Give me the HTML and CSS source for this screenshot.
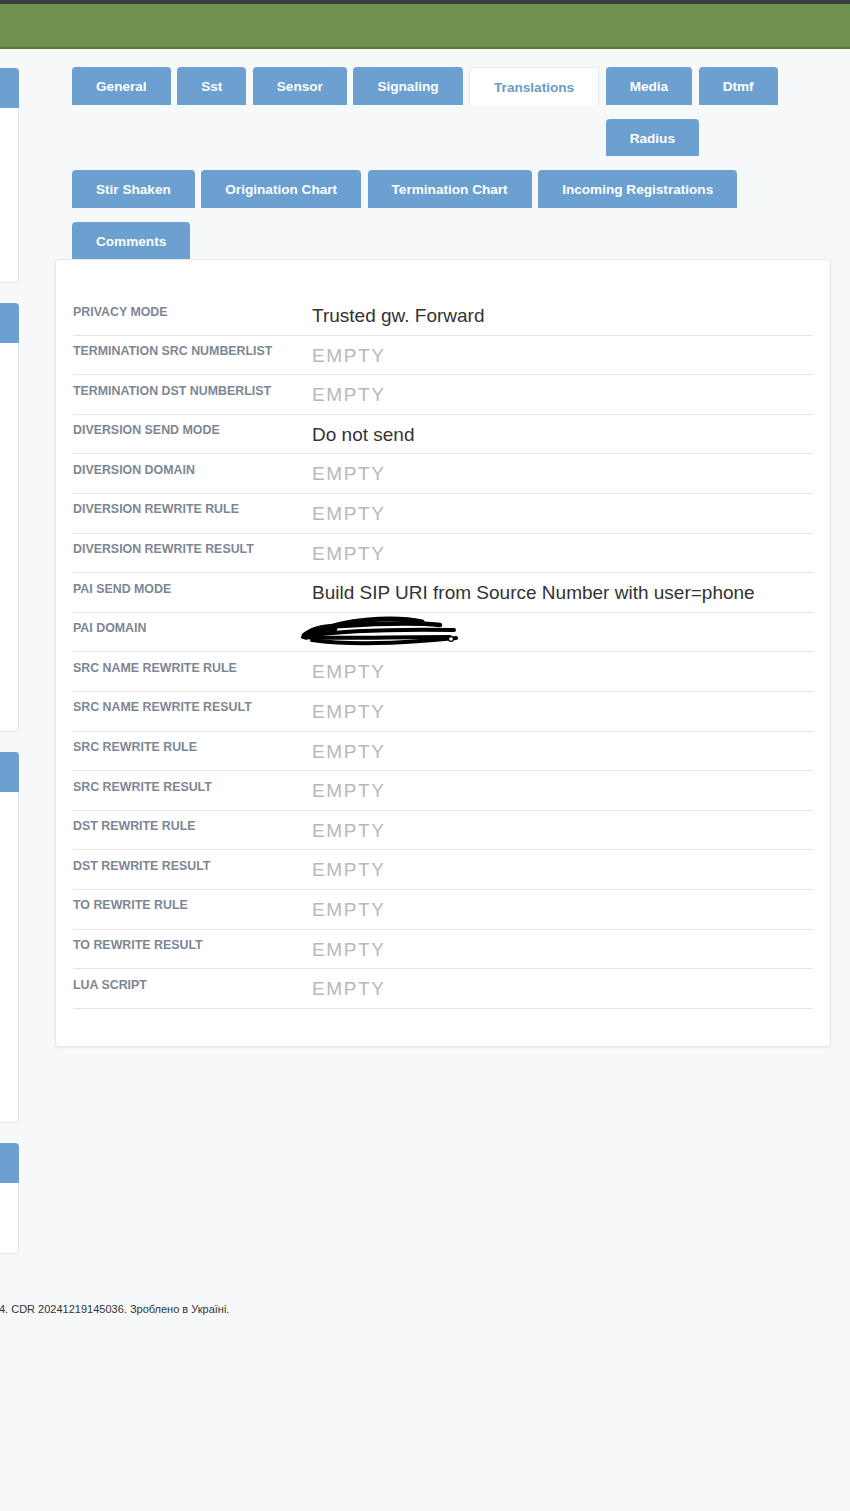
FILE: index.html
```html
<!DOCTYPE html>
<html lang="uk">
<head>
    <meta charset="UTF-8">
    <meta name="viewport" content="width=device-width, initial-scale=1.0">
    <title>Gateway - Translations</title>
    <link rel="stylesheet" href="styles.css">
</head>
<body>
    <header class="topbar"></header>

    <div class="layout">
        <aside class="sidebar">
            <div class="side-panel side-panel-1"><div class="side-head"></div></div>
            <div class="side-panel side-panel-2"><div class="side-head"></div></div>
            <div class="side-panel side-panel-3"><div class="side-head"></div></div>
            <div class="side-panel side-panel-4"><div class="side-head"></div></div>
        </aside>

        <main class="content">
            <ul class="tabs">
                <li><a href="#">General</a></li>
                <li><a href="#">Sst</a></li>
                <li><a href="#">Sensor</a></li>
                <li><a href="#">Signaling</a></li>
                <li class="active"><a href="#">Translations</a></li>
                <li><a href="#">Media</a></li>
                <li><a href="#">Dtmf</a></li>
                <li><a href="#">Radius</a></li>
                <li><a href="#">Stir Shaken</a></li>
                <li><a href="#">Origination Chart</a></li>
                <li><a href="#">Termination Chart</a></li>
                <li><a href="#">Incoming Registrations</a></li>
                <li><a href="#">Comments</a></li>
            </ul>

            <div class="panel">
                <div class="attr-row">
                    <div class="attr-label">Privacy mode</div>
                    <div class="attr-value">Trusted gw. Forward</div>
                </div>
                <div class="attr-row">
                    <div class="attr-label">Termination src numberlist</div>
                    <div class="attr-value empty">Empty</div>
                </div>
                <div class="attr-row">
                    <div class="attr-label">Termination dst numberlist</div>
                    <div class="attr-value empty">Empty</div>
                </div>
                <div class="attr-row">
                    <div class="attr-label">Diversion send mode</div>
                    <div class="attr-value">Do not send</div>
                </div>
                <div class="attr-row">
                    <div class="attr-label">Diversion domain</div>
                    <div class="attr-value empty">Empty</div>
                </div>
                <div class="attr-row">
                    <div class="attr-label">Diversion rewrite rule</div>
                    <div class="attr-value empty">Empty</div>
                </div>
                <div class="attr-row">
                    <div class="attr-label">Diversion rewrite result</div>
                    <div class="attr-value empty">Empty</div>
                </div>
                <div class="attr-row">
                    <div class="attr-label">Pai send mode</div>
                    <div class="attr-value">Build SIP URI from Source Number with user=phone</div>
                </div>
                <div class="attr-row">
                    <div class="attr-label">Pai domain</div>
                    <div class="attr-value">
                        <!-- value redacted in the screenshot -->
                        <svg class="redacted" width="160" height="32" viewBox="0 0 160 32">
                            <g fill="none" stroke="#000" stroke-linecap="round">
                                <path stroke-width="7" d="M6 21 C 12 15, 22 13, 34 13"/>
                                <path stroke-width="4.5" d="M4 20 C 14 13, 24 11, 40 11 C 70 9, 110 7, 140 10"/>
                                <path stroke-width="4" d="M6 21 C 40 16, 90 14, 154 15"/>
                                <path stroke-width="4" d="M3 22 C 30 24, 90 22, 150 22"/>
                                <path stroke-width="4" d="M12 25 C 40 29, 80 29, 120 26 C 135 25, 145 24, 156 23"/>
                                <path stroke-width="5" d="M30 12 C 60 3, 100 2, 122 7"/>
                            </g>
                            <circle cx="151" cy="24" r="2.4" fill="#fff" stroke="#000" stroke-width="1.2"/>
                        </svg>
                    </div>
                </div>
                <div class="attr-row">
                    <div class="attr-label">Src name rewrite rule</div>
                    <div class="attr-value empty">Empty</div>
                </div>
                <div class="attr-row">
                    <div class="attr-label">Src name rewrite result</div>
                    <div class="attr-value empty">Empty</div>
                </div>
                <div class="attr-row">
                    <div class="attr-label">Src rewrite rule</div>
                    <div class="attr-value empty">Empty</div>
                </div>
                <div class="attr-row">
                    <div class="attr-label">Src rewrite result</div>
                    <div class="attr-value empty">Empty</div>
                </div>
                <div class="attr-row">
                    <div class="attr-label">Dst rewrite rule</div>
                    <div class="attr-value empty">Empty</div>
                </div>
                <div class="attr-row">
                    <div class="attr-label">Dst rewrite result</div>
                    <div class="attr-value empty">Empty</div>
                </div>
                <div class="attr-row">
                    <div class="attr-label">To rewrite rule</div>
                    <div class="attr-value empty">Empty</div>
                </div>
                <div class="attr-row">
                    <div class="attr-label">To rewrite result</div>
                    <div class="attr-value empty">Empty</div>
                </div>
                <div class="attr-row">
                    <div class="attr-label">Lua script</div>
                    <div class="attr-value empty">Empty</div>
                </div>
            </div>
        </main>
    </div>

    <footer class="footer">4. CDR 20241219145036. Зроблено в Україні.</footer>
</body>
</html>
```

FILE: styles.css
```css
body {
    margin: 0;
    background-color: #f6f8fa;
    font-family: "Liberation Sans", Arial, Helvetica, sans-serif;
    color: #333;
}
.topbar {
    height: 43px;
    background-color: #6f9150;
    border-top: 4px solid #363c40;
    border-bottom: 2px solid #5a7a3e;
}
.layout {
    display: flex;
    gap: 36px;
    padding-right: 19px;
}

/* left column, scrolled mostly out of view */
.sidebar {
    width: 19px;
    flex-shrink: 0;
    overflow: hidden;
    display: flex;
    flex-direction: column;
    align-items: flex-end;
    gap: 20px;
    padding: 19px 0 0;
}
.side-panel {
    width: 240px;
    flex-shrink: 0;
    box-sizing: border-box;
    background-color: #fff;
    border: 1px solid #e3e7eb;
    border-radius: 4px;
}
.side-head {
    height: 40px;
    margin: -1px -1px 0 0;
    background-color: #6ca0d0;
    border-radius: 4px 4px 0 0;
}
.side-panel-1 { height: 215px; }
.side-panel-2 { height: 429px; }
.side-panel-3 { height: 371px; }
.side-panel-4 { height: 111px; }

.content {
    flex: 1;
    min-width: 0;
}

/* tabs */
.tabs {
    list-style: none;
    margin: 0;
    padding: 4px 30px 0 17px;
    overflow: hidden;
}
.tabs li {
    float: left;
    margin: 14px 6.5px 0 0;
}
.tabs a {
    display: block;
    height: 35.5px;
    line-height: 35.5px;
    padding: 2px 24px 0;
    background-color: #6ca0d0;
    color: #fff;
    font-size: 13.6px;
    font-weight: bold;
    text-decoration: none;
    border-radius: 4px 4px 0 0;
}
.tabs .active a {
    background-color: #fff;
    color: #6d9bc5;
    border: 1px solid #e6eaee;
    border-bottom: none;
}

/* attributes panel */
.panel {
    background-color: #fff;
    border: 1px solid #e3e7eb;
    border-radius: 4px;
    box-shadow: 0 1px 2px rgba(0, 0, 0, 0.06);
    padding: 36px 17px 37px;
}
.attr-row {
    display: flex;
    height: 39.6px;
    box-sizing: border-box;
    border-bottom: 1px solid #e6e6e6;
}
.attr-label {
    width: 239px;
    flex-shrink: 0;
    padding-top: 8.5px;
    font-size: 12.4px;
    line-height: 14px;
    font-weight: bold;
    color: #7d8794;
    text-transform: uppercase;
}
.attr-value {
    padding-top: 9px;
    font-size: 19px;
    line-height: 22px;
    color: #333;
}
.attr-value.empty {
    color: #b8b8b8;
    letter-spacing: 1.6px;
    text-transform: uppercase;
}
.redacted {
    display: block;
    margin: -7px 0 0 -12px;
}

.footer {
    padding-top: 48px;
    margin-left: -1px;
    font-size: 11px;
    line-height: 14px;
    color: #333;
}
```
